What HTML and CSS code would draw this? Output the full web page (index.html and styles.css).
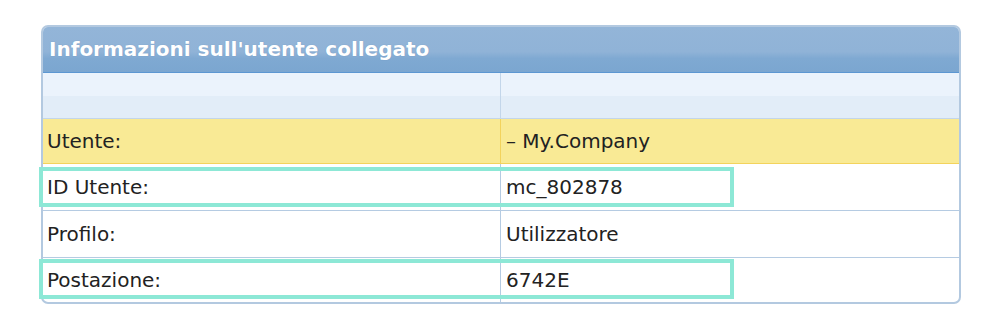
FILE: index.html
```html
<!DOCTYPE html>
<html lang="it">
<head>
<meta charset="utf-8">
<title>Informazioni sull'utente collegato</title>
<link rel="stylesheet" href="styles.css">
</head>
<body>
<div class="panel">
  <div class="panel-header">Informazioni sull'utente collegato</div>
  <div class="row row-empty">
    <div class="cell cell-label"></div>
    <div class="cell cell-value"></div>
  </div>
  <div class="row row-selected">
    <div class="cell cell-label">Utente:</div>
    <div class="cell cell-value">– My.Company</div>
  </div>
  <div class="row">
    <div class="cell cell-label">ID Utente:</div>
    <div class="cell cell-value">mc_802878</div>
    <span class="highlight highlight-first"></span>
  </div>
  <div class="row">
    <div class="cell cell-label">Profilo:</div>
    <div class="cell cell-value">Utilizzatore</div>
  </div>
  <div class="row row-last">
    <div class="cell cell-label">Postazione:</div>
    <div class="cell cell-value">6742E</div>
    <span class="highlight highlight-last"></span>
  </div>
</div>
</body>
</html>
```

FILE: styles.css
```css
html, body {
  margin: 0;
  padding: 0;
  background: #ffffff;
}

body {
  padding: 25px 0 0 41px;
  font-family: "DejaVu Sans", "Noto Sans", sans-serif;
  color: #222222;
}

.panel {
  width: 916px;
  border: 2px solid #b3c9e0;
  border-radius: 7px;
  background: #ffffff;
}

.panel-header {
  height: 45px;
  border-bottom: 1px solid #5c97d2;
  border-radius: 5px 5px 0 0;
  background: linear-gradient(to bottom, #93b5d8 0%, #90b3d7 55%, #7fa9d2 70%, #7ba6d0 100%);
  color: #ffffff;
  font-weight: bold;
  font-size: 20px;
  line-height: 44px;
  padding-left: 6px;
  text-shadow: 0 0 1px rgba(60, 100, 150, 0.4);
}

.row {
  position: relative;
  display: grid;
  grid-template-columns: 457px 1fr;
  height: 46px;
  border-bottom: 1px solid #b5cbe2;
  font-size: 20px;
}

.cell {
  display: flex;
  align-items: center;
  padding-left: 4px;
}

.cell-value {
  border-left: 1px solid #b5cbe2;
  padding-left: 5px;
}

.row-empty {
  height: 45px;
  border-bottom-color: #c3d6ea;
  background: linear-gradient(to bottom, #ebf3fc 0%, #ebf3fc 50%, #e2edf8 50%, #e2edf8 100%);
}

.row-empty .cell-value {
  border-left-color: #c3d6ea;
}

.row-selected {
  height: 44px;
  background: #f9ea95;
  border-bottom: 1px solid #f3d35c;
}

.row-selected .cell-value {
  border-left-color: #f3d35c;
}

.row-last {
  border-bottom: none;
  height: 44px;
}

.highlight {
  position: absolute;
  left: -4px;
  width: 687px;
  height: 32px;
  border: 4px solid #8de8d6;
  pointer-events: none;
}

.highlight-first {
  top: 3px;
}

.highlight-last {
  top: 1px;
}
```
